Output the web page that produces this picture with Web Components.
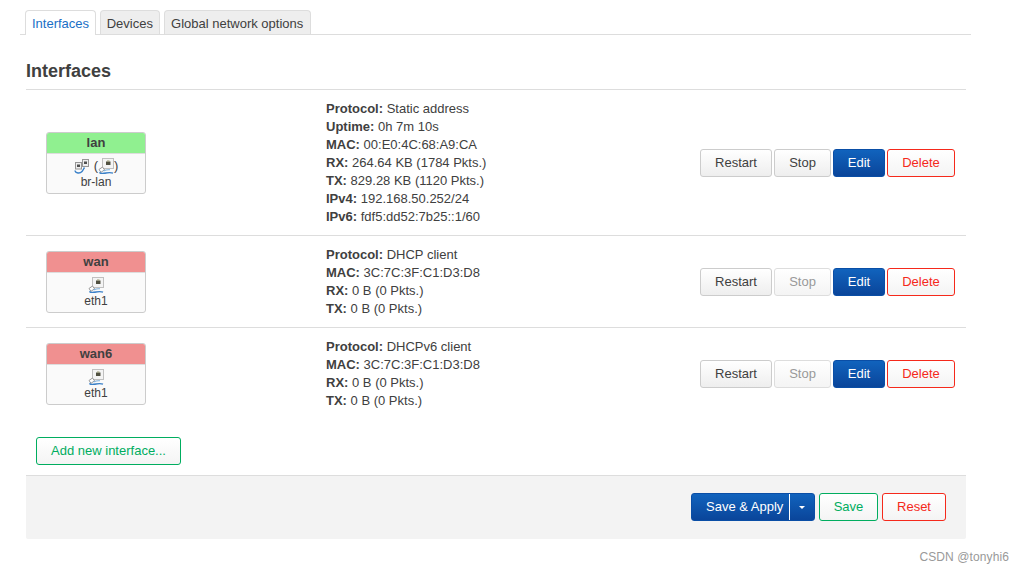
<!DOCTYPE html>
<html lang="en">
<head>
<meta charset="utf-8">
<title>Interfaces</title>
<style>
  html, body { margin: 0; background: #fff; }
  body {
    width: 1024px;
    height: 574px;
    overflow: hidden;
    font: 13px/18px "Liberation Sans", Arial, sans-serif;
    color: #404040;
  }
</style>
</head>
<body>
<lu-page>
  <lu-tabs slot="tabs">
    <lu-tab active>Interfaces</lu-tab>
    <lu-tab>Devices</lu-tab>
    <lu-tab style="padding:0 6.5px">Global network options</lu-tab>
  </lu-tabs>

  <lu-iface>
    <lu-badge slot="badge" name="lan" color="#90f090" device="br-lan" bridge></lu-badge>
    <lu-info label="Protocol">Static address</lu-info>
    <lu-info label="Uptime">0h 7m 10s</lu-info>
    <lu-info label="MAC">00:E0:4C:68:A9:CA</lu-info>
    <lu-info label="RX">264.64 KB (1784 Pkts.)</lu-info>
    <lu-info label="TX">829.28 KB (1120 Pkts.)</lu-info>
    <lu-info label="IPv4">192.168.50.252/24</lu-info>
    <lu-info label="IPv6">fdf5:dd52:7b25::1/60</lu-info>
  </lu-iface>

  <lu-iface stopped>
    <lu-badge slot="badge" name="wan" color="#f09090" device="eth1"></lu-badge>
    <lu-info label="Protocol">DHCP client</lu-info>
    <lu-info label="MAC">3C:7C:3F:C1:D3:D8</lu-info>
    <lu-info label="RX">0 B (0 Pkts.)</lu-info>
    <lu-info label="TX">0 B (0 Pkts.)</lu-info>
  </lu-iface>

  <lu-iface stopped last>
    <lu-badge slot="badge" name="wan6" color="#f09090" device="eth1"></lu-badge>
    <lu-info label="Protocol">DHCPv6 client</lu-info>
    <lu-info label="MAC">3C:7C:3F:C1:D3:D8</lu-info>
    <lu-info label="RX">0 B (0 Pkts.)</lu-info>
    <lu-info label="TX">0 B (0 Pkts.)</lu-info>
  </lu-iface>

  <lu-button slot="add" kind="add" style="width:145px">Add new interface...</lu-button>

  <lu-apply-menu slot="footer"></lu-apply-menu>
  <lu-button slot="footer" kind="add" style="width:59px">Save</lu-button>
  <lu-button slot="footer" kind="danger" style="width:64px">Reset</lu-button>
</lu-page>

<script>
(function () {
  class LuButton extends HTMLElement {
    constructor() {
      super();
      this.attachShadow({ mode: 'open' }).innerHTML = `
        <style>
          :host {
            display: inline-flex;
            box-sizing: border-box;
            height: 28px;
            align-items: center;
            justify-content: center;
            border: 1px solid #ccc;
            border-radius: 3px;
            background: linear-gradient(#fff, #eee);
            color: #404040;
            white-space: nowrap;
            line-height: 24px;
            cursor: pointer;
          }
          :host([kind="edit"]) {
            background: linear-gradient(#1163bd, #0a459a);
            border-color: #0a4ea6;
            color: #fff;
          }
          :host([kind="danger"]) {
            background: linear-gradient(#fff, #f4f4f4);
            border-color: #f5291b;
            color: #f5291b;
          }
          :host([kind="add"]) {
            background: linear-gradient(#fff, #f4f4f4);
            border-color: #00ad5f;
            color: #00ad5f;
          }
          :host([disabled]) {
            background: linear-gradient(#fff, #f4f4f4);
            border-color: #ddd;
            color: #999;
            cursor: not-allowed;
          }
        </style>
        <slot></slot>`;
    }
  }

  class LuApplyMenu extends HTMLElement {
    constructor() {
      super();
      this.attachShadow({ mode: 'open' }).innerHTML = `
        <style>
          :host {
            display: flex;
            box-sizing: border-box;
            width: 124px;
            height: 28px;
            border: 1px solid #0a4ea6;
            border-radius: 3px;
            background: linear-gradient(#1163bd, #0a459a);
            color: #fff;
            line-height: 26px;
          }
          .label { box-sizing: border-box; width: 98px; padding-left: 14px; border-right: 1px solid #fff; white-space: nowrap; }
          .caret { flex: 1; display: flex; align-items: center; justify-content: center; }
          .caret i { border: 3px solid transparent; border-top: 3px solid #fff; border-bottom: 0; }
        </style>
        <div class="label">Save &amp; Apply</div>
        <div class="caret"><i></i></div>`;
    }
  }

  class LuTabs extends HTMLElement {
    constructor() {
      super();
      this.attachShadow({ mode: 'open' }).innerHTML = `
        <style>
          :host {
            display: flex;
            gap: 4px;
            padding-left: 5px;
            width: 951px;
            height: 25px;
            box-sizing: border-box;
            border-bottom: 1px solid #ddd;
          }
        </style>
        <slot></slot>`;
    }
  }

  class LuTab extends HTMLElement {
    constructor() {
      super();
      this.attachShadow({ mode: 'open' }).innerHTML = `
        <style>
          :host {
            display: block;
            box-sizing: border-box;
            height: 24px;
            padding: 0 5.6px;
            border: 1px solid #ddd;
            border-bottom: 0;
            border-radius: 4px 4px 0 0;
            background: #eee;
            line-height: 25px;
            color: #404040;
          }
          :host([active]) {
            height: 25px;
            padding: 0 6px;
            background: #fff;
            color: #1a6fc6;
          }
        </style>
        <slot></slot>`;
    }
  }

  class LuPage extends HTMLElement {
    constructor() {
      super();
      this.attachShadow({ mode: 'open' }).innerHTML = `
        <style>
          :host { display: block; padding: 10px 0 0 26px; width: 940px; position: relative; }
          .tabs { margin-left: -6px; }
          h3 {
            margin: 26px 0 0;
            height: 28px;
            font-size: 18px;
            line-height: 20px;
            font-weight: bold;
            color: #404040;
            border-bottom: 1px solid #ddd;
          }
          .add { padding: 17px 0 10px 10px; display: flex; }
          .footer {
            display: flex;
            justify-content: flex-end;
            gap: 4px;
            height: 64px;
            box-sizing: border-box;
            padding: 17px 20px 0 0;
            background: #f3f3f3;
            border-top: 1px solid #ddd;
            border-radius: 0 0 2px 2px;
          }
          .mark {
            position: absolute;
            right: -43px;
            top: 549px;
            color: #999;
            font-size: 12px;
            line-height: 16px;
            white-space: nowrap;
            letter-spacing: .1px;
          }
        </style>
        <div class="tabs"><slot name="tabs"></slot></div>
        <h3>Interfaces</h3>
        <slot></slot>
        <div class="add"><slot name="add"></slot></div>
        <div class="footer"><slot name="footer"></slot></div>
        <div class="mark">CSDN @tonyhi6</div>`;
    }
  }

  class LuIface extends HTMLElement {
    constructor() {
      super();
      const stopped = this.hasAttribute('stopped');
      this.attachShadow({ mode: 'open' }).innerHTML = `
        <style>
          :host {
            display: grid;
            grid-template-columns: 300px 1fr auto;
            align-items: center;
            box-sizing: border-box;
            padding: 10px 11px 9px 0;
            border-bottom: 1px solid #ddd;
          }
          :host([last]) { border-bottom-color: transparent; }
          .badge { padding-left: 20px; }
          .info { display: block; }
          .actions { display: flex; gap: 2px; }
        </style>
        <div class="badge"><slot name="badge"></slot></div>
        <div class="info"><slot></slot></div>
        <div class="actions">
          <lu-button style="width:72px">Restart</lu-button>
          <lu-button style="width:57px" ${stopped ? 'disabled' : ''}>Stop</lu-button>
          <lu-button style="width:52px" kind="edit">Edit</lu-button>
          <lu-button style="width:68px" kind="danger">Delete</lu-button>
        </div>`;
    }
  }

  class LuInfo extends HTMLElement {
    constructor() {
      super();
      this.attachShadow({ mode: 'open' }).innerHTML = `
        <style>
          :host { display: block; height: 18px; white-space: nowrap; }
          b { font-weight: bold; }
        </style>
        <b></b> <slot></slot>`;
      this.shadowRoot.querySelector('b').textContent = this.getAttribute('label') + ':';
    }
  }

  // ethernet port icon, the bridge attribute draws the two-port variant
  class LuNetIcon extends HTMLElement {
    constructor() {
      super();
      const single = `
        <rect x="4.500" y="0.500" width="11" height="10" fill="#f4f4f4" stroke="#c0c0c0"/>
        <rect x="8" y="3.500" width="4.500" height="3.500" fill="#505040"/>
        <rect x="9" y="2.500" width="2.500" height="1" fill="#9a9a70"/>
        <path d="M1 11.500l3.500-2.500 2 2.800-3.500 2.500z" fill="#fff" stroke="#808080" stroke-width=".8"/>
        <path d="M2.500 14C0.500 15.500 4 15.800 8 15C10.500 14.500 13 14.400 15 15.200" fill="none" stroke="#3a80c8" stroke-width="1.400"/>
        <path d="M5.500 13C8 11.800 10 11.500 12 11.800" fill="none" stroke="#7fb0da" stroke-width="1.100"/>`;
      const bridge = `
        <rect x="1.500" y="4.500" width="6" height="6.500" fill="#eee" stroke="#969696"/>
        <rect x="3" y="6.500" width="3" height="2.500" fill="#505050"/>
        <rect x="8.500" y="1.500" width="6" height="7" fill="#eee" stroke="#969696"/>
        <rect x="10" y="3.500" width="3" height="2.500" fill="#505050"/>
        <path d="M1 12.500C1.500 15.500 6 15.800 8 13.500C9 12.300 9.500 11 10.500 9.500" fill="none" stroke="#3a80c8" stroke-width="1.400"/>`;
      this.attachShadow({ mode: 'open' }).innerHTML = `
        <style>:host { display: inline-block; width: 16px; height: 16px; vertical-align: top; } svg { display: block; }</style>
        <svg width="16" height="16" viewBox="0 0 16 16">${this.hasAttribute('bridge') ? bridge : single}</svg>`;
    }
  }

  class LuBadge extends HTMLElement {
    constructor() {
      super();
      const icons = this.hasAttribute('bridge')
        ? `<lu-net-icon bridge class="pair"></lu-net-icon>
           <span class="b">(</span><lu-net-icon></lu-net-icon><span class="b">)</span>`
        : `<lu-net-icon></lu-net-icon>`;
      this.attachShadow({ mode: 'open' }).innerHTML = `
        <style>
          :host {
            display: block;
            box-sizing: border-box;
            width: 100px;
            height: 62px;
            border: 1px solid #ccc;
            border-radius: 3px;
            background: #fafafa;
            overflow: hidden;
            text-align: center;
            font-size: 12px;
            line-height: 16px;
          }
          .name {
            height: 20px;
            line-height: 20px;
            font-size: 13px;
            font-weight: bold;
            background: var(--c);
            border-bottom: 1px solid #ddd;
            color: #404040;
          }
          .icons { display: flex; justify-content: center; align-items: center; height: 16px; margin-top: 4px; }
          .pair { margin-right: 4px; }
          .b { font-size: 13px; line-height: 16px; color: #404040; }
        </style>
        <div class="name" style="--c:${this.getAttribute('color')}">${this.getAttribute('name')}</div>
        <div class="icons">${icons}</div>
        <div class="dev">${this.getAttribute('device')}</div>`;
    }
  }

  customElements.define('lu-button', LuButton);
  customElements.define('lu-apply-menu', LuApplyMenu);
  customElements.define('lu-tab', LuTab);
  customElements.define('lu-tabs', LuTabs);
  customElements.define('lu-info', LuInfo);
  customElements.define('lu-net-icon', LuNetIcon);
  customElements.define('lu-badge', LuBadge);
  customElements.define('lu-iface', LuIface);
  customElements.define('lu-page', LuPage);
})();
</script>
</body>
</html>
